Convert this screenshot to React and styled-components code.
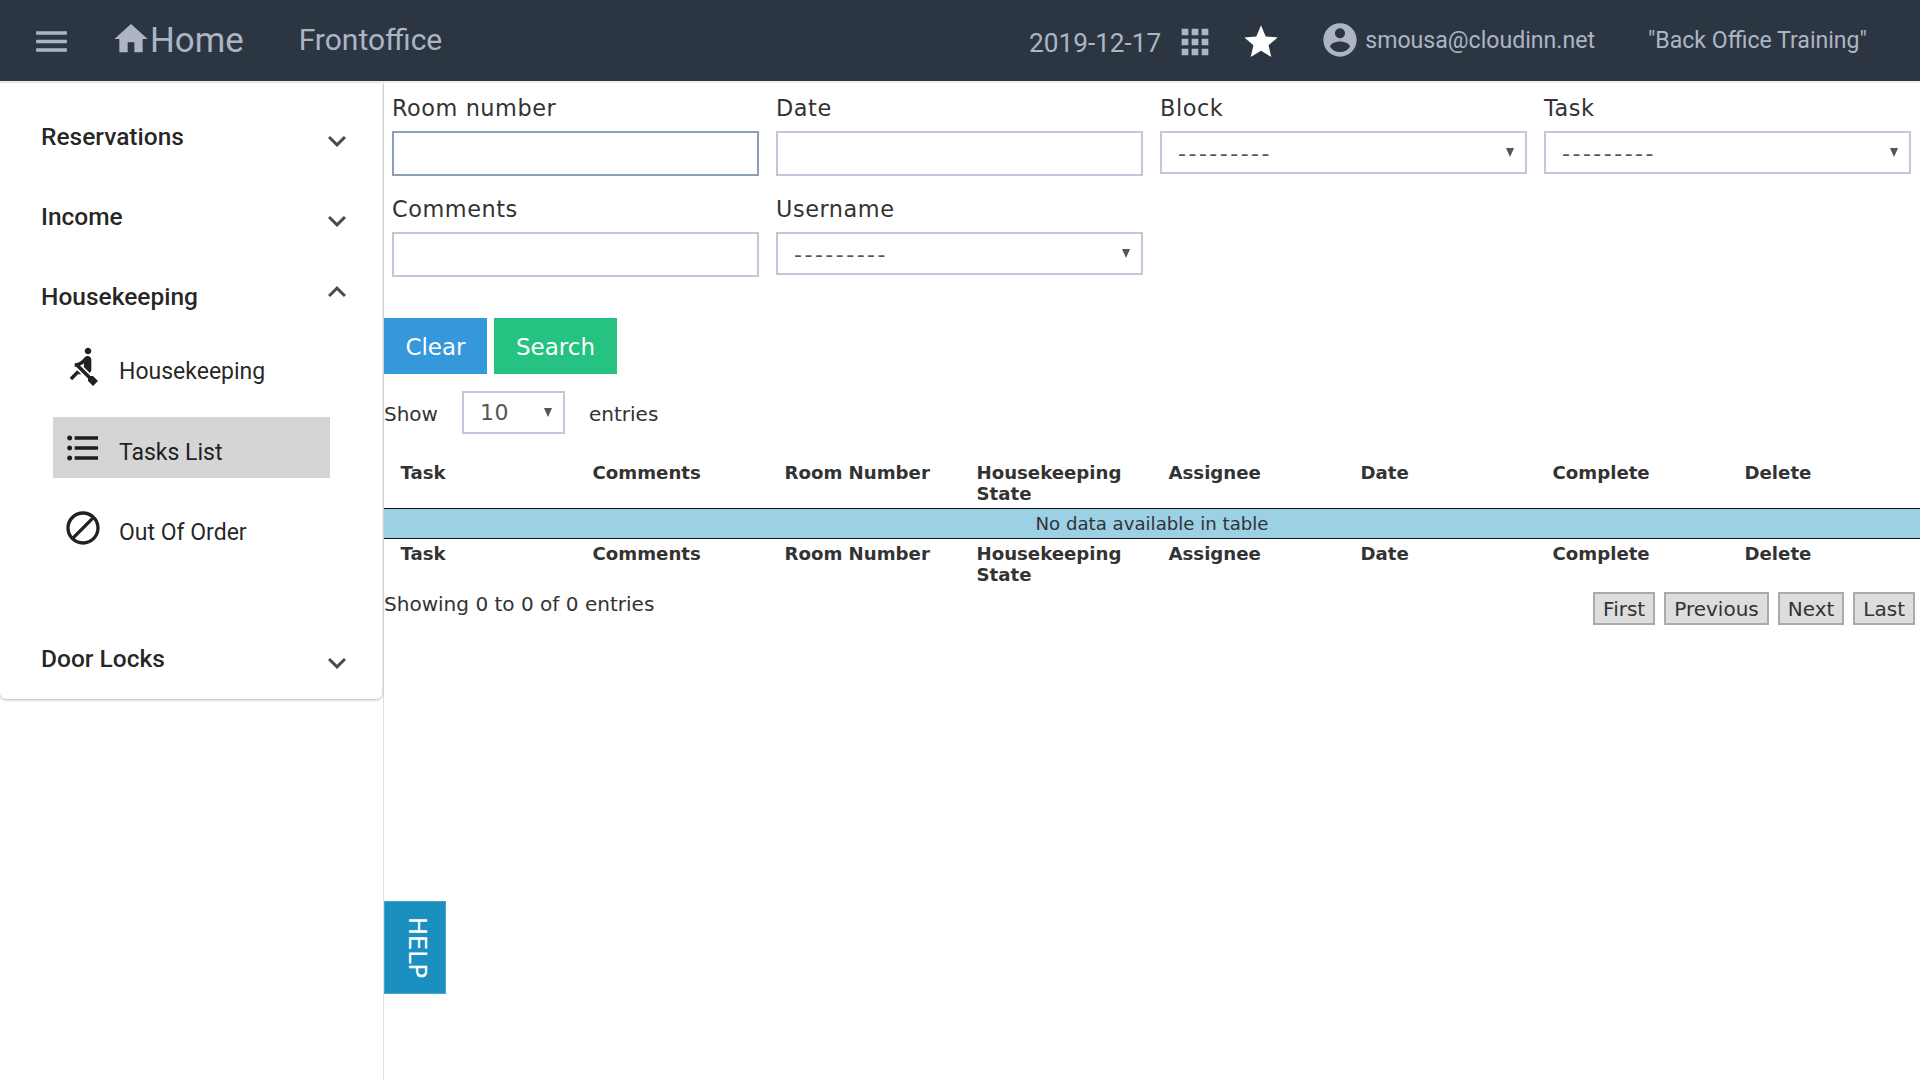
import styled, { createGlobalStyle } from "styled-components";

const Global = createGlobalStyle`
  html, body { margin: 0; padding: 0; background: #fff; }
  body { font-family: "DejaVu Sans", sans-serif; color: #333; overflow: hidden; }
  * { box-sizing: border-box; }
`;

const paths = {
  menu: "M3 18h18v-2H3v2zm0-5h18v-2H3v2zm0-7v2h18V6H3z",
  home: "M10 20v-6h4v6h5v-8h3L12 3 2 12h3v8z",
  apps: "M4 8h4V4H4v4zm6 12h4v-4h-4v4zm-6 0h4v-4H4v4zm0-6h4v-4H4v4zm6 0h4v-4h-4v4zm6-10v4h4V4h-4zm-6 4h4V4h-4v4zm6 6h4v-4h-4v4zm0 6h4v-4h-4v4z",
  star: "M12 17.27L18.18 21l-1.64-7.03L22 9.24l-7.19-.61L12 2 9.19 8.63 2 9.24l5.46 4.73L5.82 21z",
  account: "M12 2C6.48 2 2 6.48 2 12s4.48 10 10 10 10-4.48 10-10S17.52 2 12 2zm0 3c1.66 0 3 1.34 3 3s-1.34 3-3 3-3-1.34-3-3 1.34-3 3-3zm0 14.2c-2.5 0-4.71-1.28-6-3.22.03-1.99 4-3.08 6-3.08 1.99 0 5.97 1.09 6 3.08-1.29 1.94-3.5 3.22-6 3.22z",
  down: "M16.59 8.59L12 13.17 7.41 8.59 6 10l6 6 6-6z",
  up: "M12 8l-6 6 1.41 1.41L12 10.83l4.59 4.58L18 14z",
  rowing: "M8.5 14.5L4 19l1.5 1.5L9 17h2l-2.5-2.5zM15 1c-1.1 0-2 .9-2 2s.9 2 2 2 2-.9 2-2-.9-2-2-2zm6 20.01L18 24l-2.99-3.01V19.5l-7.1-7.09c-.31.05-.61.07-.91.07v-2.16c1.66.03 3.61-.87 4.67-2.04l1.4-1.55c.19-.21.43-.38.69-.5.29-.14.62-.23.96-.23h.03C15.99 6.01 17 7.02 17 8.26v5.75c0 .84-.35 1.61-.92 2.16l-3.58-3.58v-2.27c-.63.52-1.43 1.02-2.29 1.39L16.5 18H18l3 3.01z",
  list: "M4 10.5c-.83 0-1.5.67-1.5 1.5s.67 1.5 1.5 1.5 1.5-.67 1.5-1.5-.67-1.5-1.5-1.5zm0-6c-.83 0-1.5.67-1.5 1.5S3.17 7.5 4 7.5 5.5 6.83 5.5 6 4.83 4.5 4 4.5zm0 12c-.83 0-1.5.68-1.5 1.5s.68 1.5 1.5 1.5 1.5-.68 1.5-1.5-.67-1.5-1.5-1.5zM7 19h14v-2H7v2zm0-6h14v-2H7v2zm0-8v2h14V5H7z",
  block: "M12 2C6.48 2 2 6.48 2 12s4.48 10 10 10 10-4.48 10-10S17.52 2 12 2zM4 12c0-4.42 3.58-8 8-8 1.85 0 3.55.63 4.9 1.69L5.69 16.9C4.63 15.55 4 13.85 4 12zm8 8c-1.85 0-3.55-.63-4.9-1.69L18.31 7.1C19.37 8.45 20 10.15 20 12c0 4.42-3.58 8-8 8z",
};

const Svg = styled.svg`
  display: block;
  flex: none;
  width: ${(props) => props.$size || 40}px;
  height: ${(props) => props.$size || 40}px;
  fill: ${(props) => props.$color || "currentColor"};
`;

const Icon = ({ name, size, color }) => (
  <Svg viewBox="0 0 24 24" $size={size} $color={color}>
    <path d={paths[name]} />
  </Svg>
);

const Page = styled.div`
  width: 1920px;
  height: 1080px;
  position: relative;
  display: flex;
  flex-direction: column;
  overflow: hidden;
`;

const Header = styled.header`
  height: 83px;
  flex: none;
  display: flex;
  align-items: center;
  background: #2c3643;
  border-bottom: 2px solid #eeeeee;
  color: #adb5c3;
  font-family: Roboto, sans-serif;
  padding: 0 53px 2px 31px;
`;

const MenuButton = styled.div`
  width: 41px;
  margin-top: 4px;
  margin-right: 39px;
`;

const HomeLink = styled.div`
  display: flex;
  align-items: center;
  font-size: 34.8px;
  margin-right: 55px;
`;

const HomeIcon = styled.div`
  margin-top: -1px;
  margin-right: -1px;
`;

const Section = styled.div`
  font-size: 30px;
`;

const HeaderRight = styled.div`
  margin-left: auto;
  display: flex;
  align-items: center;
`;

const DateText = styled.div`
  font-size: 26.2px;
  margin-top: 7px;
  margin-right: 14px;
`;

const HeaderIcon = styled.div`
  margin-right: ${(props) => props.$gap}px;
  margin-top: ${(props) => props.$top || 0}px;
`;

const HeaderText = styled.div`
  font-size: 23.1px;
  margin-top: 2px;
  margin-right: ${(props) => props.$gap || 0}px;
`;

const Body = styled.div`
  flex: 1;
  display: flex;
  min-height: 0;
`;

const Aside = styled.aside`
  width: 384px;
  flex: none;
  border-right: 1px solid #dddddd;
`;

const Paper = styled.nav`
  width: 382px;
  padding-top: 14px;
  background: #fff;
  border-radius: 0 0 6px 6px;
  box-shadow: 0 1px 3px rgba(0, 0, 0, 0.3);
  font-family: Roboto, sans-serif;
  color: rgba(0, 0, 0, 0.87);
`;

const GroupRow = styled.div`
  height: 80px;
  display: flex;
  align-items: center;
  justify-content: space-between;
  padding: 0 27px 0 41px;
  font-size: 24.5px;
  font-weight: 500;
`;

const GroupLabel = styled.span`
  margin-top: -2px;
`;

const Chevron = styled.div`
  color: #4a4a4a;
  margin-top: ${(props) => (props.$open ? -10 : 8)}px;
`;

const SubList = styled.div`
  height: 282px;
  padding-left: 53px;
`;

const SubItem = styled.div`
  width: 277px;
  height: 61px;
  margin-bottom: 19px;
  display: flex;
  align-items: center;
  padding-left: 10px;
  font-size: 23px;
  background: ${(props) => (props.$active ? "#d5d5d5" : "transparent")};
`;

const SubIcon = styled.div`
  margin-top: ${(props) => props.$top || 0}px;
`;

const SubLabel = styled.span`
  margin-left: 16px;
  margin-top: ${(props) => props.$top || 9}px;
`;

const Main = styled.main`
  flex: 1;
  min-width: 0;
`;

const FormGrid = styled.div`
  display: grid;
  grid-template-columns: repeat(4, 1fr);
  row-gap: 17px;
  padding-top: 9px;
`;

const Field = styled.div`
  padding: 0 9.5px 0 8px;
`;

const Label = styled.label`
  display: block;
  height: 32px;
  line-height: 32px;
  margin-bottom: 7px;
  font-size: 22.4px;
  letter-spacing: 0.55px;
  color: #333;
`;

const Input = styled.input`
  display: block;
  width: 100%;
  height: 45px;
  background: #fff;
  border: 2px solid ${(props) => (props.$focus ? "#8e9dbb" : "#c0c9d9")};
  outline: none;
`;

const SelectBox = styled.div`
  position: relative;
  width: ${(props) => (props.$small ? "103px" : "100%")};
  height: 43px;
  display: flex;
  align-items: center;
  padding-left: 16px;
  padding-top: ${(props) => (props.$small ? 0 : 2)}px;
  border: 2px solid #c0c9d9;
  background: #fff;
  color: #555;
  font-size: 22px;
  letter-spacing: ${(props) => (props.$small ? "0.5px" : "2.5px")};

  &::after {
    content: "";
    position: absolute;
    right: 11px;
    top: 15px;
    border-left: 4.5px solid transparent;
    border-right: 4.5px solid transparent;
    border-top: 9px solid #555;
  }
`;

const Buttons = styled.div`
  display: flex;
  gap: 7px;
  margin-top: 41px;
`;

const ActionButton = styled.button`
  height: 56px;
  width: ${(props) => props.$width}px;
  border: none;
  padding: 2px 0 0;
  color: #fff;
  font-family: inherit;
  font-size: 23px;
  background: ${(props) => props.$bg};
`;

const LengthRow = styled.div`
  display: flex;
  align-items: center;
  margin-top: 17px;
  font-size: 20px;
`;

const LengthText = styled.span`
  margin-top: 2px;
  margin-right: ${(props) => props.$gap || 0}px;
  margin-left: ${(props) => props.$left || 0}px;
`;

const Table = styled.table`
  width: 100%;
  table-layout: fixed;
  border-collapse: collapse;
  margin-top: 23px;
  font-size: 18.15px;
`;

const HeadCell = styled.th`
  padding: 5px 16px 4px 16.5px;
  line-height: 21px;
  text-align: left;
  vertical-align: top;
  font-weight: 700;
  color: #333;
  border-bottom: 1px solid #111;
`;

const FootCell = styled.th`
  padding: 4px 16px 5px 16.5px;
  line-height: 21px;
  text-align: left;
  vertical-align: top;
  font-weight: 700;
  color: #333;
  border-top: 1px solid #111;
`;

const EmptyCell = styled.td`
  height: 29px;
  padding: 1px 0 0;
  text-align: center;
  line-height: 28px;
  background: #9cd0e5;
  color: #333;
`;

const TableFooter = styled.div`
  display: flex;
  justify-content: space-between;
  align-items: flex-start;
  padding-right: 5px;
`;

const InfoText = styled.div`
  margin-top: 2px;
  font-size: 20.05px;
  line-height: 24px;
`;

const Pagination = styled.div`
  display: flex;
  gap: 9px;
  margin-top: 2px;
`;

const PageButton = styled.div`
  height: 33px;
  padding: 0 8px;
  display: flex;
  align-items: center;
  background: #dddddd;
  border: 2px solid #aaaaaa;
  color: #333;
  font-size: 20px;
`;

const HelpTab = styled.div`
  position: absolute;
  left: 384px;
  top: 901px;
  width: 62px;
  height: 93px;
  padding-left: 3px;
  display: flex;
  align-items: center;
  justify-content: center;
  background: #1a8fc0;
  border: 1px solid #46a5cd;
  color: #fff;
  font-size: 24px;
  writing-mode: vertical-rl;
`;

const columns = ["Task", "Comments", "Room Number", "Housekeeping State", "Assignee", "Date", "Complete", "Delete"];

const App = () => {
  return (
    <Page>
      <Global />
      <Header>
        <MenuButton>
          <Icon name="menu" size={41} />
        </MenuButton>
        <HomeLink>
          <HomeIcon>
            <Icon name="home" />
          </HomeIcon>
          Home
        </HomeLink>
        <Section>Frontoffice</Section>
        <HeaderRight>
          <DateText>2019-12-17</DateText>
          <HeaderIcon $gap={26} $top={4}>
            <Icon name="apps" />
          </HeaderIcon>
          <HeaderIcon $gap={39} $top={4}>
            <Icon name="star" color="#fff" />
          </HeaderIcon>
          <HeaderIcon $gap={5}>
            <Icon name="account" />
          </HeaderIcon>
          <HeaderText $gap={53}>smousa@cloudinn.net</HeaderText>
          <HeaderText>"Back Office Training"</HeaderText>
        </HeaderRight>
      </Header>
      <Body>
        <Aside>
          <Paper>
            <GroupRow>
              <GroupLabel>Reservations</GroupLabel>
              <Chevron><Icon name="down" size={36} /></Chevron>
            </GroupRow>
            <GroupRow>
              <GroupLabel>Income</GroupLabel>
              <Chevron><Icon name="down" size={36} /></Chevron>
            </GroupRow>
            <GroupRow>
              <GroupLabel>Housekeeping</GroupLabel>
              <Chevron $open><Icon name="up" size={36} /></Chevron>
            </GroupRow>
            <SubList>
              <SubItem>
                <SubIcon $top={-3}>
                  <Icon name="rowing" />
                </SubIcon>
                <SubLabel $top={7}>Housekeeping</SubLabel>
              </SubItem>
              <SubItem $active>
                <SubIcon>
                  <Icon name="list" />
                </SubIcon>
                <SubLabel>Tasks List</SubLabel>
              </SubItem>
              <SubItem>
                <SubIcon>
                  <Icon name="block" />
                </SubIcon>
                <SubLabel>Out Of Order</SubLabel>
              </SubItem>
            </SubList>
            <GroupRow>
              <GroupLabel>Door Locks</GroupLabel>
              <Chevron><Icon name="down" size={36} /></Chevron>
            </GroupRow>
          </Paper>
        </Aside>
        <Main>
          <FormGrid>
            <Field>
              <Label>Room number</Label>
              <Input $focus />
            </Field>
            <Field>
              <Label>Date</Label>
              <Input />
            </Field>
            <Field>
              <Label>Block</Label>
              <SelectBox>---------</SelectBox>
            </Field>
            <Field>
              <Label>Task</Label>
              <SelectBox>---------</SelectBox>
            </Field>
            <Field>
              <Label>Comments</Label>
              <Input />
            </Field>
            <Field>
              <Label>Username</Label>
              <SelectBox>---------</SelectBox>
            </Field>
          </FormGrid>
          <Buttons>
            <ActionButton $bg="#3498db" $width={103}>Clear</ActionButton>
            <ActionButton $bg="#26c281" $width={123}>Search</ActionButton>
          </Buttons>
          <LengthRow>
            <LengthText $gap={24}>Show</LengthText>
            <SelectBox $small>10</SelectBox>
            <LengthText $left={24}>entries</LengthText>
          </LengthRow>
          <Table>
            <thead>
              <tr>
                {columns.map((col) => <HeadCell key={col}>{col}</HeadCell>)}
              </tr>
            </thead>
            <tbody>
              <tr>
                <EmptyCell colSpan={8}>No data available in table</EmptyCell>
              </tr>
            </tbody>
            <tfoot>
              <tr>
                {columns.map((col) => <FootCell key={col}>{col}</FootCell>)}
              </tr>
            </tfoot>
          </Table>
          <TableFooter>
            <InfoText>Showing 0 to 0 of 0 entries</InfoText>
            <Pagination>
              <PageButton>First</PageButton>
              <PageButton>Previous</PageButton>
              <PageButton>Next</PageButton>
              <PageButton>Last</PageButton>
            </Pagination>
          </TableFooter>
        </Main>
      </Body>
      <HelpTab>HELP</HelpTab>
    </Page>
  );
};

export default App;
